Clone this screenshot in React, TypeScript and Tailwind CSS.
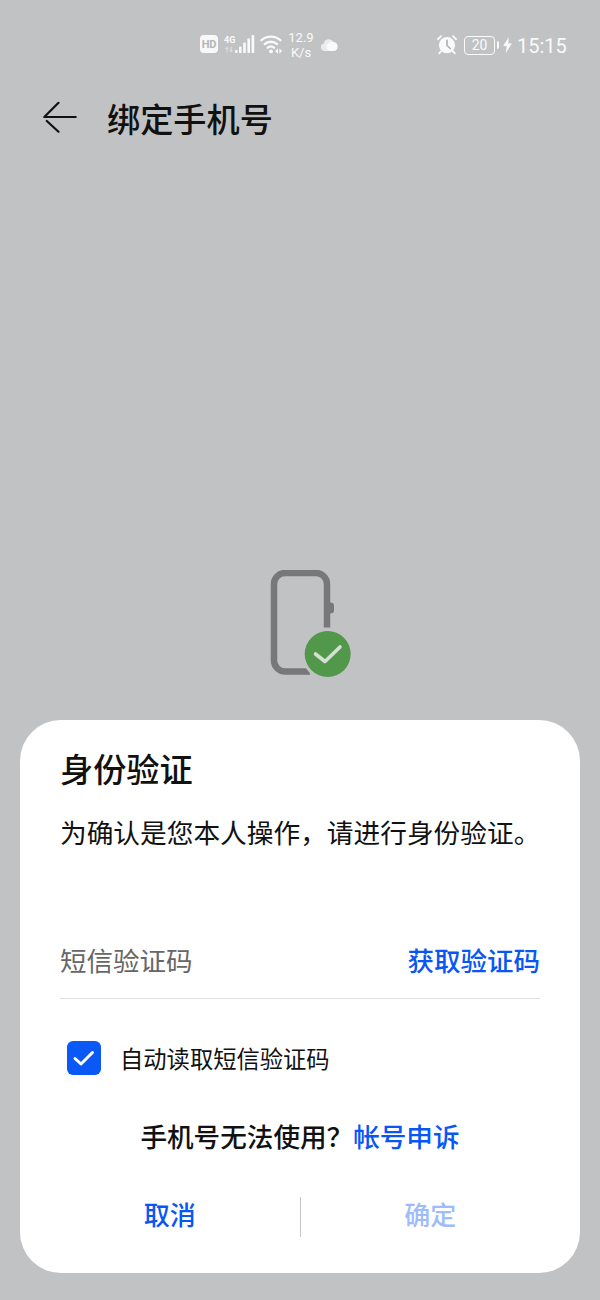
import { useState } from 'react';

function StatusBar() {
  return (
    <div className="flex h-[90px] items-center pl-[200px] pr-[33px] text-[#fafafa]">
      <div className="mb-[2px] flex h-[18px] w-[18px] items-center justify-center rounded-[4px] bg-[#f8f8f8] font-['Roboto',sans-serif] text-[11px] font-bold leading-none tracking-tight text-[#b4b5b7]">
        HD
      </div>

      <div className="ml-[6px] flex h-5 w-[11px] flex-col pb-[1px]">
        <span className="whitespace-nowrap font-['Roboto',sans-serif] text-[9px] font-bold leading-[11px]">4G</span>
        <svg className="h-2 w-[11px] opacity-45" viewBox="0 0 11 8" fill="currentColor">
          <path d="M3 .5 5.200 3H3.600v3.500H2.400V3H.8zM7.200 6.500 5 4h1.500V.5h1.300V4h1.500z" />
        </svg>
      </div>
      <svg className="h-5 w-5" viewBox="11 0 20 20" fill="currentColor">
        <rect x="11" y="15" width="2.500" height="3" rx="0.8" />
        <rect x="15" y="11.500" width="2.600" height="6.500" rx="0.8" />
        <rect x="19.200" y="7.500" width="2.600" height="10.500" rx="0.8" />
        <rect x="23.400" y="3.500" width="2.600" height="14.500" rx="0.8" />
        <rect x="27.600" y="0" width="2.600" height="18" rx="0.8" />
      </svg>

      <svg className="ml-[5px] h-5 w-6" viewBox="0 0 24 20" fill="none" stroke="currentColor" strokeWidth="2.3" strokeLinecap="round">
        <path d="M1.500 5.200a14 14 0 0 1 18.800 0M4.700 9.100a9.300 9.300 0 0 1 12.400 0M7.800 12.700a4.700 4.700 0 0 1 6.200 0" />
        <circle cx="11" cy="16.300" r="1.900" fill="currentColor" stroke="none" />
        <path d="M18 13.500v5.200L15.200 16.100zM19.400 13.500v5.200l2.800-2.600z" fill="currentColor" stroke="none" />
      </svg>

      <div className="ml-[3px] w-7 text-center font-['Roboto',sans-serif] text-[13px] leading-[15.5px]">
        <div>12.9</div>
        <div>K/s</div>
      </div>

      <svg className="ml-[5px] h-[14px] w-[19px]" viewBox="0 0 18 14" fill="currentColor">
        <path d="M4 13a3.8 3.8 0 0 1-.6-7.5A5 5 0 0 1 12.8 4 4.6 4.6 0 0 1 13.4 13z" opacity="0.75" />
        <path d="M9 13a4.2 4.2 0 0 1-1.2-7.6 4.5 4.5 0 0 1 4.9-1.5A4.6 4.6 0 0 1 13.4 13z" />
      </svg>

      <svg className="ml-auto h-5 w-5" viewBox="0 0 20 20" fill="none" stroke="currentColor" strokeLinecap="round">
        <circle cx="10" cy="10.2" r="8.1" fill="currentColor" stroke="none" />
        <path d="M1 4.2 4 1.2M19 4.2 16 1.2M4 16.3l-1.8 2M16 16.3l1.8 2" strokeWidth="1.9" />
        <path d="M10 5.3v5l3.3 3.2" stroke="#b2b3b5" strokeWidth="1.7" />
      </svg>

      <div className="ml-[7px] flex h-[19px] w-[31px] items-center justify-center rounded-[4px] border-[1.5px] border-[#fafafa] font-['Roboto',sans-serif] text-[14px] leading-none">
        20
      </div>
      <div className="ml-[2px] h-2 w-[2px] rounded-r bg-[#fafafa]" />

      <svg className="ml-[4px] h-4 w-[9px]" viewBox="0 0 9 16" fill="currentColor">
        <path d="M5.8 0 .2 8.9h3.500L2.800 16 8.900 6.500H5.200z" />
      </svg>
      <div className="ml-[5px] w-[50px] whitespace-nowrap pt-px font-['Roboto',sans-serif] text-[20px] leading-none">
        15:15
      </div>
    </div>
  );
}

function PageHeader() {
  return (
    <header className="flex h-[54px] items-center pl-[43px]">
      <svg className="h-8 w-[34px]" viewBox="0 0 34 32" fill="none" stroke="#111" strokeWidth="2.2" strokeLinecap="round" strokeLinejoin="round">
        <path d="M15.5 1.800 1.300 16H32.700M3.800 20l11.700 10.700" />
      </svg>
      <h1 className="ml-[30px] pt-[2px] text-[33.2px] font-medium leading-none">绑定手机号</h1>
    </header>
  );
}

function PhoneVerified() {
  return (
    <svg className="mx-auto block h-[110px] w-[82px] translate-x-[11px]" viewBox="0 0 82 110" fill="none">
      <path d="M57 57V13.500A11 11 0 0 0 46 2.500H15A11 11 0 0 0 4 13.500V90A11 11 0 0 0 15 101H40" transform="translate(0 .5)" stroke="#77787a" strokeWidth="6.500" />
      <path d="M60 32.500c2.800 0 4 1.200 4 3v5c0 2-1.200 3-4 3z" fill="#77787a" />
      <circle cx="57.700" cy="84" r="26" fill="#c1c2c4" />
      <circle cx="57.700" cy="84" r="23" fill="#51984a" />
      <path d="m45.500 84 9.500 7.500L70 77" stroke="#d3e0d2" strokeWidth="3.600" strokeLinecap="round" strokeLinejoin="round" />
    </svg>
  );
}

function VerifyDialog() {
  const [autoRead, setAutoRead] = useState(true);

  return (
    <section className="mx-5 h-[553px] rounded-[41px] bg-white px-[40px] pt-[28px]">
      <h2 className="h-10 text-[33.2px] font-medium leading-10">身份验证</h2>
      <p className="mt-[26px] h-9 whitespace-nowrap text-[26.7px] leading-9">
        为确认是您本人操作，请进行身份验证。
      </p>

      <div className="mt-[72px] flex h-[77px] items-center justify-between border-b-[1.5px] border-[#dfdfdf] text-[26.5px]">
        <span className="text-[#666]">短信验证码</span>
        <button className="font-medium text-[#0756f5]">获取验证码</button>
      </div>

      <div className="mt-[42px] flex h-[34px] items-center pl-[7px]">
        <button
          onClick={() => setAutoRead(!autoRead)}
          className="flex h-[34px] w-[34px] items-center justify-center rounded-[6px] bg-[#0a59f7]"
        >
          {autoRead && (
            <svg className="h-6 w-6" viewBox="0 0 24 24" fill="none" stroke="#fff" strokeWidth="3" strokeLinecap="round" strokeLinejoin="round">
              <path d="m3 12.500 6 5.500L20.500 6.500" />
            </svg>
          )}
        </button>
        <span className="ml-[19px] text-[23.300px]">自动读取短信验证码</span>
      </div>

      <div className="mt-[41px] flex h-10 items-center justify-center whitespace-nowrap text-[26.6px] font-medium">
        <span>手机号无法使用？</span>
        <button className="text-[#0756f5]">帐号申诉</button>
      </div>

      <div className="-mx-5 mt-[41px] flex h-10 items-center text-[26px] font-medium">
        <button className="flex-1 pb-[7px] text-[#0756f5]">取消</button>
        <div className="h-10 w-px bg-[#c8c8c8]" />
        <button className="flex-1 pb-[7px] text-[#9dbcfc]">确定</button>
      </div>
    </section>
  );
}

export default function App() {
  return (
    <div className="flex h-[1300px] w-[600px] flex-col overflow-hidden bg-[#c1c2c4] font-['Noto_Sans_CJK_SC',sans-serif] text-[#111]">
      <StatusBar />
      <PageHeader />
      <main className="mt-[426px] h-[150px]">
        <PhoneVerified />
      </main>
      <VerifyDialog />
    </div>
  );
}
